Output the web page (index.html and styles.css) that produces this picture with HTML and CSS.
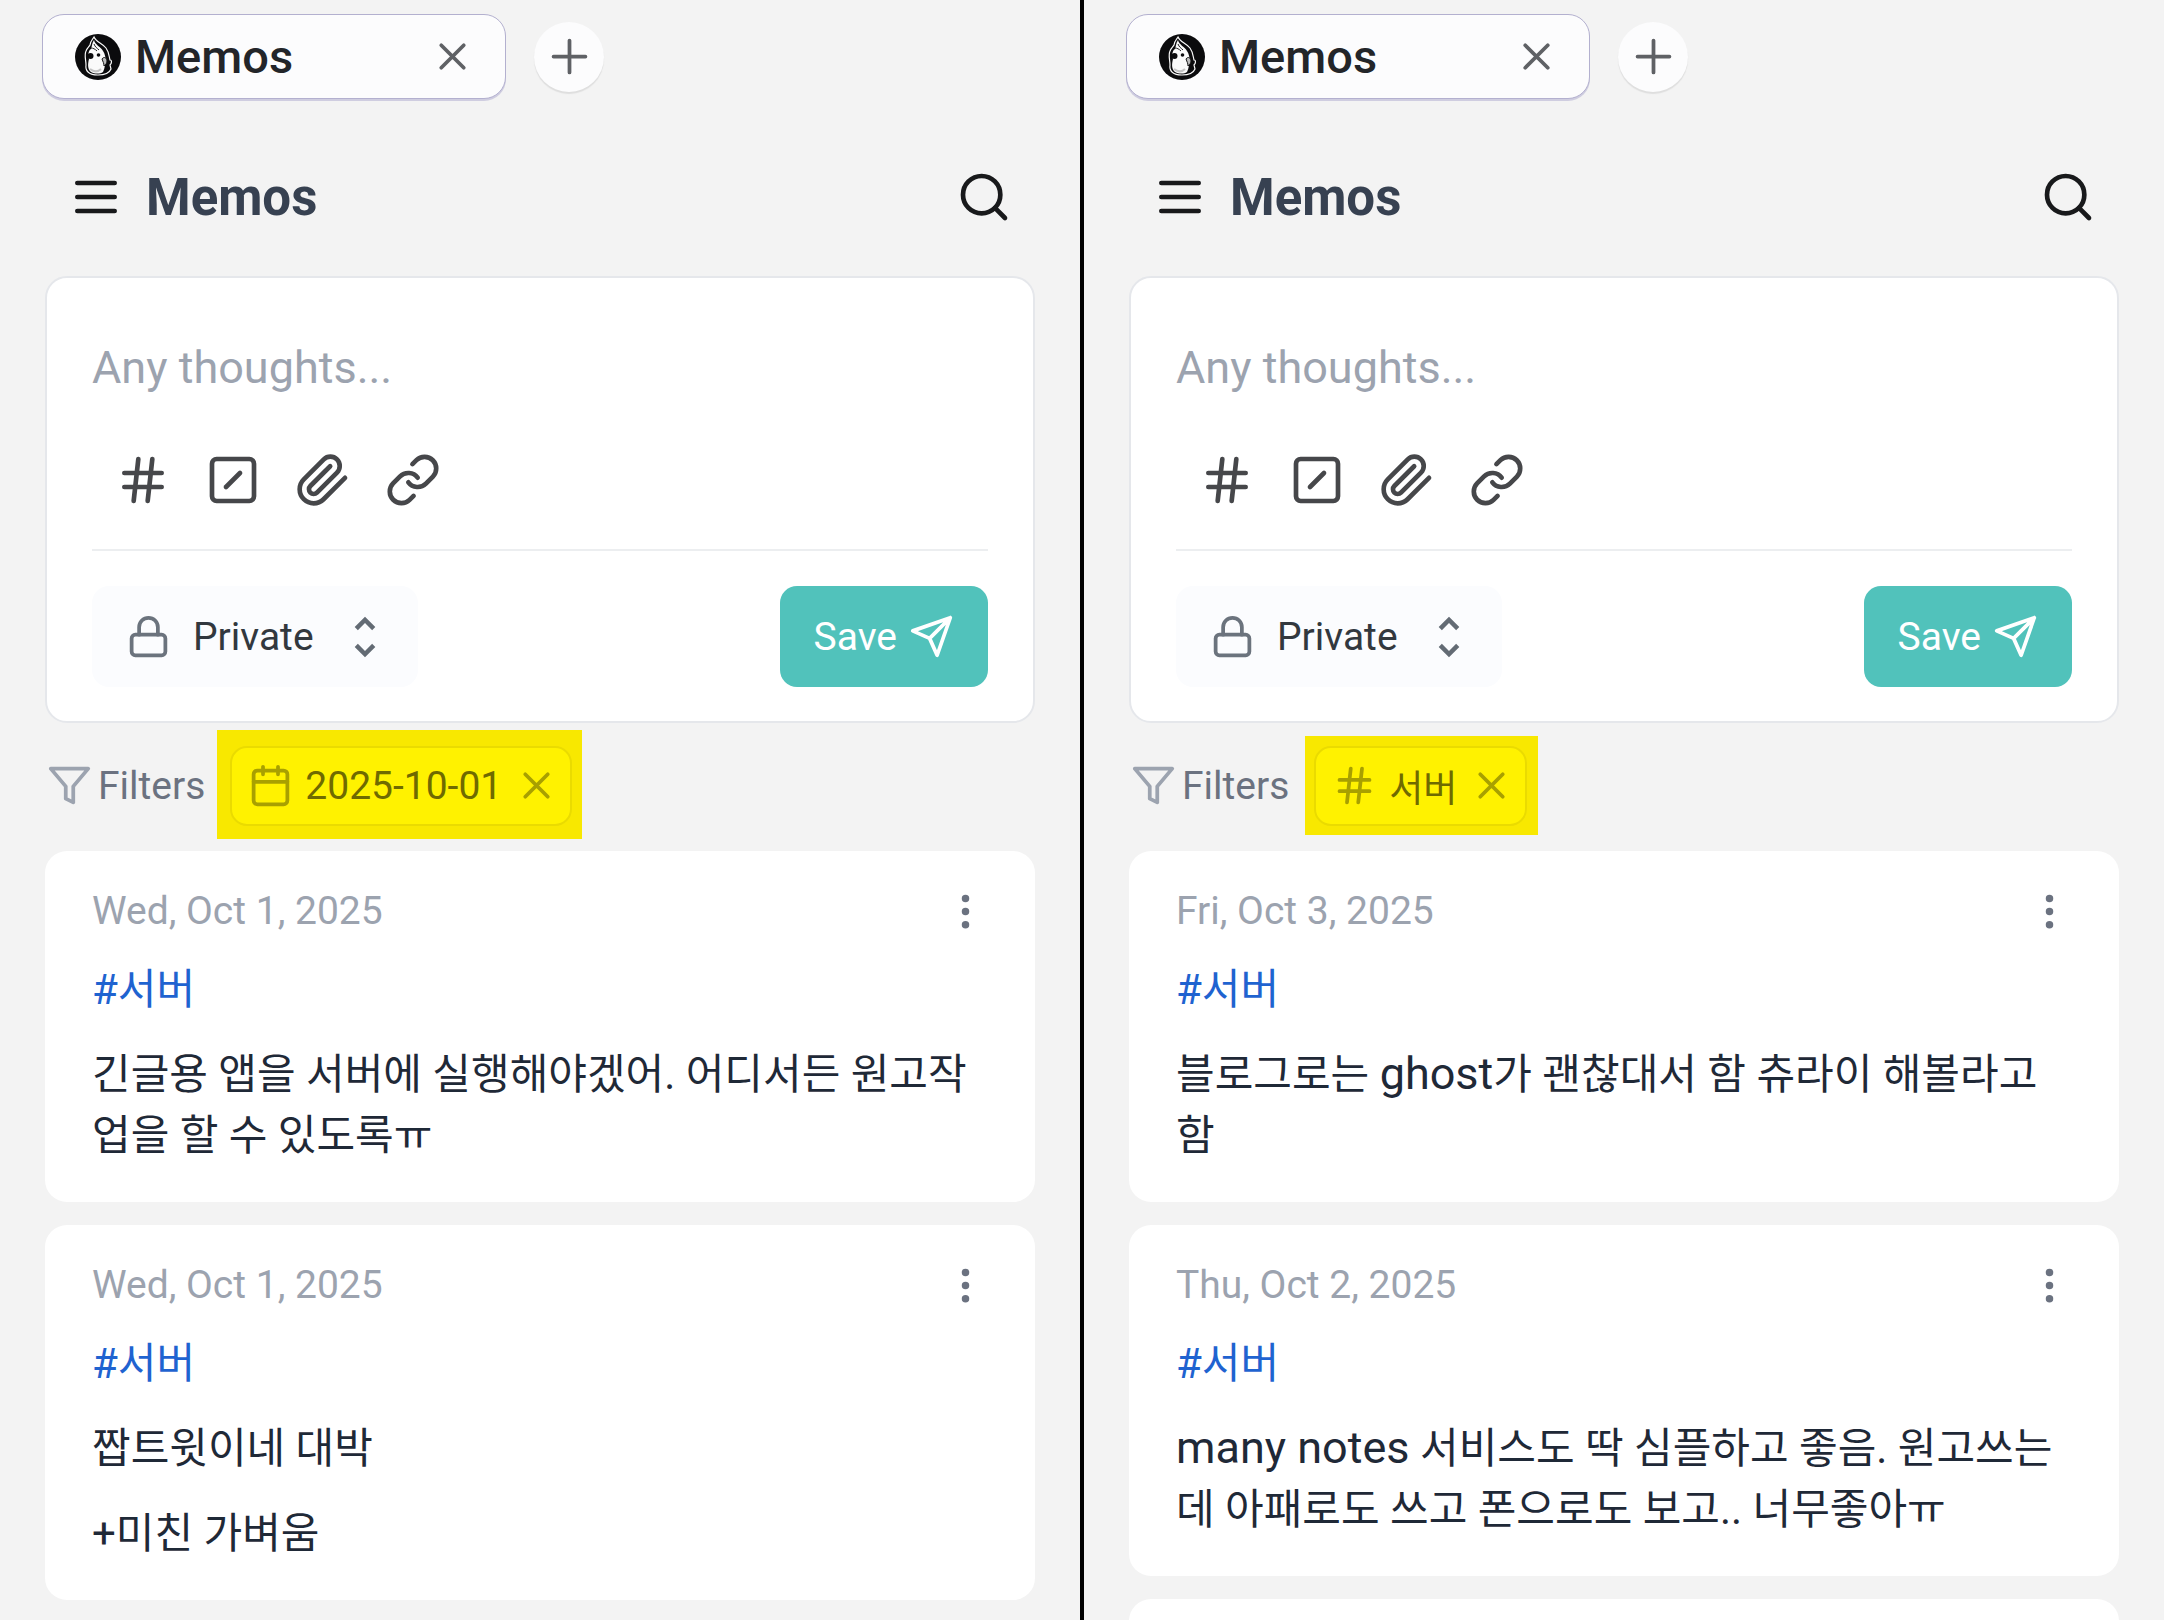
FILE: index.html
```html
<!DOCTYPE html>
<html lang="en">
<head>
    <meta charset="UTF-8">
    <meta name="viewport" content="width=device-width, initial-scale=1.0">
    <title>Memos</title>
    <link rel="stylesheet" href="styles.css">
</head>
<body>
    <!-- Shared icons -->
    <svg class="sprite" aria-hidden="true">
        <symbol id="i-logo" viewBox="0 0 46 46">
            <circle cx="23" cy="23" r="23" fill="#0b0b0d"/>
            <path d="M19 3c2 5 8 6 12 11 3 4 3 8 4 12 2 0 2 3 0 5l1 4c-2 5-7 6-13 6-9 0-13-4-12-10 0-5-2-10 0-14 1-3 3-4 4-6 0-3 2-5 4-8z" fill="#0b0b0d" stroke="#fafafa" stroke-width="1.2"/>
            <path d="M19 6c1 5 7 7 9 11 2 3 2 5 3 9-1 4-1 8-3 12-3 2-8 2-12 0-4-3-3-9-2-13-1-4-1-8 2-10 1-3 1-6 3-9z" fill="#fafafa"/>
            <path d="M19 10c1 3 3 4 5 6M16 14c2 0 4 1 6 3" fill="none" stroke="#222" stroke-width="1"/>
            <circle cx="15.500" cy="22" r="3" fill="#0b0b0d"/>
            <circle cx="23.500" cy="21" r="1.800" fill="#0b0b0d"/>
            <path d="M27 25c2-3 5-1 5 2s-2 4-3 5c0-3-1-4-2-7z" fill="#bbb" stroke="#111" stroke-width="1"/>
            <path d="M15 35c4 3 8 3 11 0" fill="none" stroke="#c4c4c4" stroke-width="2"/>
        </symbol>
        <symbol id="i-x" viewBox="0 0 24 24"><path d="M18 6 6 18M6 6l12 12"/></symbol>
        <symbol id="i-plus" viewBox="0 0 24 24"><path d="M3.500 12h17M12 3.500v17"/></symbol>
        <symbol id="i-menu" viewBox="0 0 24 24"><path d="M4 6h16M4 12h16M4 18h16"/></symbol>
        <symbol id="i-search" viewBox="0 0 24 24"><circle cx="11" cy="11" r="8"/><path d="m21 21-4.3-4.3"/></symbol>
        <symbol id="i-hash" viewBox="0 0 24 24"><path d="M4 9h16M4 15h16M10 3 8 21M16 3l-2 18"/></symbol>
        <symbol id="i-slash" viewBox="0 0 24 24"><rect x="3" y="3" width="18" height="18" rx="2"/><path d="m9 15 6-6"/></symbol>
        <symbol id="i-clip" viewBox="0 0 24 24"><path d="m21.44 11.05-9.19 9.19a6 6 0 0 1-8.49-8.49l8.57-8.57A4 4 0 1 1 18 8.84l-8.59 8.57a2 2 0 0 1-2.83-2.83l8.49-8.48"/></symbol>
        <symbol id="i-link" viewBox="0 0 24 24"><path d="M10 13a5 5 0 0 0 7.54.54l3-3a5 5 0 0 0-7.07-7.07l-1.72 1.71"/><path d="M14 11a5 5 0 0 0-7.54-.54l-3 3a5 5 0 0 0 7.07 7.07l1.71-1.71"/></symbol>
        <symbol id="i-lock" viewBox="0 0 24 24"><rect x="3" y="11" width="18" height="11" rx="2"/><path d="M7 11V7a5 5 0 0 1 10 0v4"/></symbol>
        <symbol id="i-unfold" viewBox="0 0 24 24"><path d="M12 5.83 15.17 9l1.41-1.41L12 3 7.41 7.59 8.83 9 12 5.83zm0 12.34L8.83 15l-1.41 1.41L12 21l4.59-4.59L15.17 15 12 18.17z"/></symbol>
        <symbol id="i-send" viewBox="0 0 24 24"><path d="m22 2-7 20-4-9-9-4ZM22 2 11 13"/></symbol>
        <symbol id="i-filter" viewBox="0 0 24 24"><path d="M22 3H2l8 9.46V19l4 2v-8.54L22 3z"/></symbol>
        <symbol id="i-calendar" viewBox="0 0 24 24"><path d="M8 2v4M16 2v4M3 10h18"/><rect x="3" y="4" width="18" height="18" rx="2"/></symbol>
        <symbol id="i-more" viewBox="0 0 24 24"><circle cx="12" cy="12" r="1"/><circle cx="12" cy="5" r="1"/><circle cx="12" cy="19" r="1"/></symbol>
    </svg>

    <div class="screens">
        <section class="screen">
            <div class="tabs">
                <div class="tab">
                    <svg class="logo"><use href="#i-logo"/></svg>
                    <span class="tab-title">Memos</span>
                    <button class="tab-close" aria-label="Close tab"><svg class="icon icon-sm"><use href="#i-x"/></svg></button>
                </div>
                <button class="tab-new" aria-label="New tab"><svg class="icon icon-sm"><use href="#i-plus"/></svg></button>
            </div>
            <header class="header">
                <button aria-label="Menu"><svg class="icon"><use href="#i-menu"/></svg></button>
                <h1>Memos</h1>
                <button class="search" aria-label="Search"><svg class="icon"><use href="#i-search"/></svg></button>
            </header>
            <main class="content">
                <form class="editor">
                    <input class="thoughts" type="text" placeholder="Any thoughts..." aria-label="Memo">
                    <div class="tools">
                        <button type="button" aria-label="Tag"><svg class="icon"><use href="#i-hash"/></svg></button>
                        <button type="button" aria-label="Commands"><svg class="icon"><use href="#i-slash"/></svg></button>
                        <button type="button" aria-label="Attach"><svg class="icon"><use href="#i-clip"/></svg></button>
                        <button type="button" aria-label="Link"><svg class="icon"><use href="#i-link"/></svg></button>
                    </div>
                    <div class="actions">
                        <label class="visibility">
                            <svg class="icon icon-sm"><use href="#i-lock"/></svg>
                            <select aria-label="Visibility"><option>Private</option></select>
                            <svg class="unfold"><use href="#i-unfold"/></svg>
                        </label>
                        <button class="save" type="button">Save <svg class="icon icon-sm"><use href="#i-send"/></svg></button>
                    </div>
                </form>
                <div class="filters">
                    <svg class="icon icon-sm"><use href="#i-filter"/></svg>
                    <span class="filters-label">Filters</span>
                    <div class="chip chip-date">
                        <svg class="icon icon-sm"><use href="#i-calendar"/></svg>
                        <span>2025-10-01</span>
                        <button aria-label="Remove filter"><svg class="icon icon-sm"><use href="#i-x"/></svg></button>
                    </div>
                </div>
                <div class="memos">
                    <article class="memo">
                        <div class="memo-head">
                            <time>Wed, Oct 1, 2025</time>
                            <button aria-label="More"><svg class="icon icon-sm"><use href="#i-more"/></svg></button>
                        </div>
                        <p><a href="#">#서버</a></p>
                        <p>긴글용 앱을 서버에 실행해야겠어. 어디서든 원고작업을 할 수 있도록ㅠ</p>
                    </article>
                    <article class="memo">
                        <div class="memo-head">
                            <time>Wed, Oct 1, 2025</time>
                            <button aria-label="More"><svg class="icon icon-sm"><use href="#i-more"/></svg></button>
                        </div>
                        <p><a href="#">#서버</a></p>
                        <p>짭트윗이네 대박</p>
                        <p>+미친 가벼움</p>
                    </article>
                </div>
            </main>
        </section>

        <section class="screen">
            <div class="tabs">
                <div class="tab">
                    <svg class="logo"><use href="#i-logo"/></svg>
                    <span class="tab-title">Memos</span>
                    <button class="tab-close" aria-label="Close tab"><svg class="icon icon-sm"><use href="#i-x"/></svg></button>
                </div>
                <button class="tab-new" aria-label="New tab"><svg class="icon icon-sm"><use href="#i-plus"/></svg></button>
            </div>
            <header class="header">
                <button aria-label="Menu"><svg class="icon"><use href="#i-menu"/></svg></button>
                <h1>Memos</h1>
                <button class="search" aria-label="Search"><svg class="icon"><use href="#i-search"/></svg></button>
            </header>
            <main class="content">
                <form class="editor">
                    <input class="thoughts" type="text" placeholder="Any thoughts..." aria-label="Memo">
                    <div class="tools">
                        <button type="button" aria-label="Tag"><svg class="icon"><use href="#i-hash"/></svg></button>
                        <button type="button" aria-label="Commands"><svg class="icon"><use href="#i-slash"/></svg></button>
                        <button type="button" aria-label="Attach"><svg class="icon"><use href="#i-clip"/></svg></button>
                        <button type="button" aria-label="Link"><svg class="icon"><use href="#i-link"/></svg></button>
                    </div>
                    <div class="actions">
                        <label class="visibility">
                            <svg class="icon icon-sm"><use href="#i-lock"/></svg>
                            <select aria-label="Visibility"><option>Private</option></select>
                            <svg class="unfold"><use href="#i-unfold"/></svg>
                        </label>
                        <button class="save" type="button">Save <svg class="icon icon-sm"><use href="#i-send"/></svg></button>
                    </div>
                </form>
                <div class="filters">
                    <svg class="icon icon-sm"><use href="#i-filter"/></svg>
                    <span class="filters-label">Filters</span>
                    <div class="chip chip-tag">
                        <svg class="icon icon-sm"><use href="#i-hash"/></svg>
                        <span>서버</span>
                        <button aria-label="Remove filter"><svg class="icon icon-sm"><use href="#i-x"/></svg></button>
                    </div>
                </div>
                <div class="memos">
                    <article class="memo">
                        <div class="memo-head">
                            <time>Fri, Oct 3, 2025</time>
                            <button aria-label="More"><svg class="icon icon-sm"><use href="#i-more"/></svg></button>
                        </div>
                        <p><a href="#">#서버</a></p>
                        <p>블로그로는 <span class="latin">ghost</span>가 괜찮대서 함 츄라이 해볼라고 함</p>
                    </article>
                    <article class="memo">
                        <div class="memo-head">
                            <time>Thu, Oct 2, 2025</time>
                            <button aria-label="More"><svg class="icon icon-sm"><use href="#i-more"/></svg></button>
                        </div>
                        <p><a href="#">#서버</a></p>
                        <p><span class="latin">many notes</span> 서비스도 딱 심플하고 좋음. 원고쓰는데 아패로도 쓰고 폰으로도 보고.. 너무좋아ㅠ</p>
                    </article>
                    <article class="memo"></article>
                </div>
            </main>
        </section>
    </div>
</body>
</html>
```
FILE: styles.css
```css
* {
    box-sizing: border-box;
}
body {
    margin: 0;
    font-family: Roboto, "Noto Sans CJK KR", sans-serif;
    font-size: 39px;
    color: #1f2937;
}
button, input, select {
    font: inherit;
    color: inherit;
    border: none;
    background: none;
    padding: 0;
    margin: 0;
}
button {
    display: flex;
    align-items: center;
    cursor: pointer;
}
.sprite {
    display: none;
}
.icon {
    width: 56px;
    height: 56px;
    flex: none;
    fill: none;
    stroke: currentColor;
    stroke-width: 2;
    stroke-linecap: round;
    stroke-linejoin: round;
}
.icon-sm {
    width: 45px;
    height: 45px;
}

/* two screens side by side, the gap is the black divider */
.screens {
    display: grid;
    grid-template-columns: 1fr 1fr;
    gap: 4px;
    height: 100vh;
    background: #000;
}
.screen {
    background: #f3f3f3;
    overflow: hidden;
}

/* browser tabs */
.tabs {
    display: flex;
    align-items: center;
    gap: 28px;
    padding: 14px 42px 0;
}
.tab {
    display: flex;
    align-items: center;
    width: 464px;
    height: 85px;
    padding: 0 30px 0 32px;
    border: 1px solid #b3b0cf;
    border-radius: 22px;
    background: #fcfcfd;
    box-shadow: 0 2px 0 #cfcde0;
}
.logo {
    width: 46px;
    height: 46px;
    margin-right: 14px;
}
.tab-title {
    font-size: 47px;
    font-weight: 500;
    color: #232529;
}
.tab-close {
    margin-left: auto;
    color: #5f6165;
}
.tab-new {
    justify-content: center;
    width: 70px;
    height: 70px;
    border-radius: 50%;
    background: #fcfcfd;
    color: #5f6165;
    box-shadow: 0 2px 1px #dedede;
}

.header {
    display: flex;
    align-items: center;
    height: 134px;
    margin: 31px 68px 12px;
    color: #18191b;
}
.header h1 {
    margin: 0 0 0 22px;
    font-size: 51px;
    font-weight: 700;
    color: #374151;
}
.search {
    margin-left: auto;
}

.content {
    padding: 0 45px;
}
.editor {
    padding: 44px 45px 34px;
    border: 2px solid #e5e7eb;
    border-radius: 22px;
    background: #fff;
}
.thoughts {
    display: block;
    width: 100%;
    height: 90px;
    font-size: 45px;
    outline: none;
}
.thoughts::placeholder {
    color: #9ca3af;
    opacity: 1;
}
.tools {
    display: flex;
    gap: 34px;
    padding: 40px 23px 41px;
    border-bottom: 2px solid #eceef0;
    color: #46474a;
}
.actions {
    display: flex;
    align-items: center;
    justify-content: space-between;
    padding-top: 35px;
}
.visibility {
    display: flex;
    align-items: center;
    height: 101px;
    padding: 0 26px 0 34px;
    border-radius: 17px;
    background: #fbfcfe;
    color: #6b737d;
}
.visibility select {
    appearance: none;
    margin: 0 24px 0 22px;
    color: #32383e;
}
.unfold {
    width: 54px;
    height: 54px;
    fill: #636b74;
}
.save {
    gap: 12px;
    height: 101px;
    padding: 0 34px;
    border-radius: 17px;
    background: #51c2bb;
    color: #fff;
}

.filters {
    display: flex;
    align-items: center;
    height: 128px;
    padding: 0 0 3px 2px;
    color: #9ca3af;
}
.filters-label {
    margin: 0 25px 0 6px;
    color: #6b7280;
}
.chip {
    position: relative;
    z-index: 0;
    display: flex;
    align-items: center;
    gap: 12px;
    height: 80px;
    padding: 0 11px 0 16px;
    border: 2px solid #eadb00;
    border-radius: 17px;
    color: #a8a000;
}
.chip span {
    color: #6f6a00;
}
.chip-tag span {
    font-size: 37px;
}
/* marker highlight around the chip */
.chip::before,
.chip::after {
    content: "";
    position: absolute;
    z-index: -2;
    background: #f8e800;
}
.chip::after {
    z-index: -1;
    inset: -2px;
    border: 2px solid #eadb00;
    border-radius: 17px;
    background: #fff200;
}
.chip-date::before {
    inset: -18px -12px -15px -15px;
}
.chip-tag::before {
    inset: -12px -13px -11px -11px;
}

.memos {
    display: grid;
    gap: 23px;
}
.memo {
    min-height: 350px;
    padding: 34px 47px 36px;
    border-radius: 22px;
    background: #fff;
    font-size: 42px;
    line-height: 61px;
}
.memo-head {
    display: flex;
    align-items: center;
    justify-content: space-between;
    height: 52px;
    margin-bottom: 22px;
    font-size: 39px;
    color: #9ca3af;
}
.memo-head button {
    color: #6b7280;
}
.memo p {
    margin: 0 0 24px;
}
.memo p:last-child {
    margin-bottom: 0;
}
.memo a {
    color: #1f63d0;
    text-decoration: none;
}
/* latin words next to hangul look small at the same size */
.latin {
    font-size: 45px;
    line-height: 1;
}
```
